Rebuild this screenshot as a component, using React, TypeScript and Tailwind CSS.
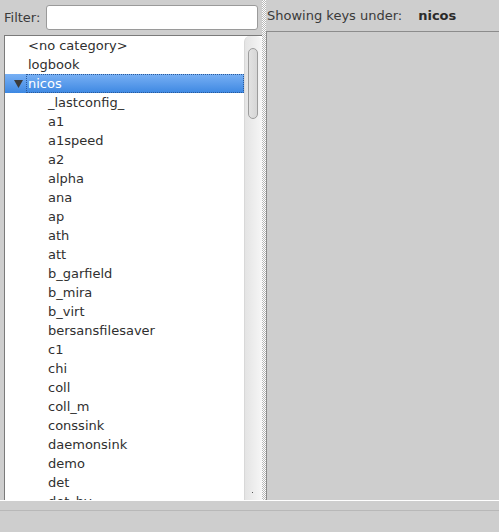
const children = [
  '_lastconfig_',
  'a1',
  'a1speed',
  'a2',
  'alpha',
  'ana',
  'ap',
  'ath',
  'att',
  'b_garfield',
  'b_mira',
  'b_virt',
  'bersansfilesaver',
  'c1',
  'chi',
  'coll',
  'coll_m',
  'conssink',
  'daemonsink',
  'demo',
  'det',
  'det_hv',
];

function Row({ label, indent }: { label: string; indent: boolean }) {
  return (
    <div className={`h-[19px] flex items-center whitespace-nowrap ${indent ? 'pl-[43px]' : 'pl-[23px]'}`}>
      {label}
    </div>
  );
}

export default function App() {
  return (
    <div
      className="w-[499px] h-[532px] flex flex-col bg-[#cecece] text-[#2f2f2f] text-[13px] overflow-hidden"
      style={{ fontFamily: '"DejaVu Sans", sans-serif' }}
    >
      <div className="h-[500px] flex">
        {/* left pane */}
        <div className="w-[262px] flex flex-col">
          <div className="h-[35px] flex items-center pl-[4px] gap-[4px]">
            <span className="text-[#3a3a3a]">Filter:</span>
            <input className="w-[212px] h-[25px] ml-auto mr-[4px] mb-[1px] bg-white border border-[#9a9a9a] rounded-[3px] outline-none" />
          </div>
          <div className="flex-1 ml-[4px] flex border-l border-t border-[#7a7a7a] bg-white overflow-hidden">
            <div className="w-[239px] overflow-hidden">
              <Row label="<no category>" indent={false} />
              <Row label="logbook" indent={false} />
              <div className="h-[19px] flex bg-gradient-to-b from-[#78b0f4] to-[#3d88e2] text-white">
                <div className="w-[21px] flex items-center justify-end pr-[3px]">
                  <svg width="9" height="8" viewBox="0 0 9 8">
                    <path d="M0 0 H9 L4.5 8 Z" fill="#3c3c3c" />
                  </svg>
                </div>
                <div className="flex-1 flex items-center pl-[1px] border border-dotted border-[#2b5a9a]">nicos</div>
              </div>
              {children.map((c) => (
                <Row key={c} label={c} indent />
              ))}
            </div>
            <div className="w-[18px] relative bg-gradient-to-r from-[#e4e4e4] to-[#f6f6f6] border-l border-[#d8d8d8] rounded-t-[6px]">
              <div className="absolute left-[3px] top-[12px] w-[10px] h-[71px] rounded-[5px] border border-[#9c9c9c] bg-gradient-to-r from-[#e2e2e2] to-[#d6d6d6]" />
              <div className="absolute left-[7px] bottom-[7px] w-px h-px bg-[#555]" />
            </div>
          </div>
        </div>
        {/* splitter */}
        <div
          className="w-[4px] bg-[#b4b4b4]"
          style={{
            backgroundImage:
              'repeating-conic-gradient(#ffffff 0% 25%, #b8b8b8 0% 50%)',
            backgroundSize: '2px 2px',
          }}
        />
        {/* right pane */}
        <div className="flex-1 flex flex-col">
          <div className="h-[31px] flex items-center pl-[1px] text-[#3a3a3a] whitespace-nowrap">
            <span>Showing keys under:</span>
            <span className="ml-[16px] font-bold text-[#2a2a2a]">nicos</span>
          </div>
          <div className="flex-1 border-t border-l border-[#8c8c8c]" />
        </div>
      </div>
      <div className="h-px bg-white" />
      <div className="h-[9px]" />
      <div className="h-px bg-[#b8b8b8]" />
      <div className="flex-1" />
    </div>
  );
}
